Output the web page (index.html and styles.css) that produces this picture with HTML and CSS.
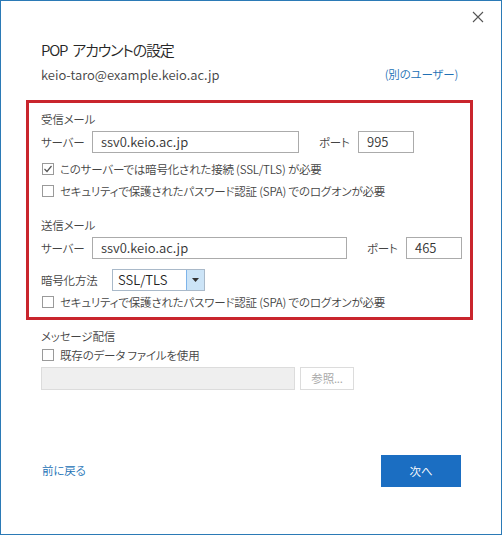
FILE: index.html
```html
<!DOCTYPE html>
<html lang="ja">
<head>
    <meta charset="UTF-8">
    <title>POP アカウントの設定</title>
    <link rel="stylesheet" href="styles.css">
</head>
<body>
    <div id="dialog">
        <div class="topbar">
            <svg class="close" width="12" height="12" viewBox="0 0 12 12">
                <path d="M1 1 L11 11 M11 1 L1 11" stroke="#555" stroke-width="1.1" fill="none"/>
            </svg>
        </div>
        <div class="main">
            <h1 class="title">POP アカウントの設定</h1>
            <div class="account">
                <span class="email">keio-taro@example.keio.ac.jp</span>
                <a class="link">(別のユーザー)</a>
            </div>

            <div class="servers">
                <div class="section">受信メール</div>
                <div class="row">
                    <span class="label">サーバー</span>
                    <span class="field host-in">ssv0.keio.ac.jp</span>
                    <span class="label port-label">ポート</span>
                    <span class="field port">995</span>
                </div>
                <div class="check first">
                    <span class="box"><svg width="10" height="10" viewBox="0 0 10 10"><path d="M1.5 5 L4 7.5 L8.5 2" stroke="#555" stroke-width="1.2" fill="none"/></svg></span>
                    <span>このサーバーでは暗号化された接続 (SSL/TLS) が必要</span>
                </div>
                <div class="check">
                    <span class="box"></span>
                    <span>セキュリティで保護されたパスワード認証 (SPA) でのログオンが必要</span>
                </div>

                <div class="section out">送信メール</div>
                <div class="row">
                    <span class="label">サーバー</span>
                    <span class="field host-out">ssv0.keio.ac.jp</span>
                    <span class="label port-label">ポート</span>
                    <span class="field port">465</span>
                </div>
                <div class="row crypt">
                    <span class="label wide">暗号化方法</span>
                    <span class="select">
                        <span class="value">SSL/TLS</span>
                        <span class="arrow"><svg width="7" height="4" viewBox="0 0 7 4"><path d="M0 0 H7 L3.5 4 Z" fill="#333"/></svg></span>
                    </span>
                </div>
                <div class="check">
                    <span class="box"></span>
                    <span>セキュリティで保護されたパスワード認証 (SPA) でのログオンが必要</span>
                </div>
            </div>

            <div class="section delivery">メッセージ配信</div>
            <div class="check">
                <span class="box"></span>
                <span>既存のデータ ファイルを使用</span>
            </div>
            <div class="row file">
                <span class="field disabled"></span>
                <span class="browse">参照...</span>
            </div>
        </div>
        <div class="footer">
            <a class="link back">前に戻る</a>
            <span class="next">次へ</span>
        </div>
    </div>
</body>
</html>
```

FILE: styles.css
```css
*{
    margin: 0;
    padding: 0;
    box-sizing: border-box;
}
body{
    background: #ffffff;
    font-family: "Noto Sans CJK JP", "Noto Sans", sans-serif;
    font-feature-settings: "palt";
    font-weight: 350;
    color: #444444;
    font-size: 11.5px;
    letter-spacing: -0.2px;
}
#dialog{
    width: 502px;
    height: 535px;
    border: 1px solid #2b7ab6;
    display: flex;
    flex-direction: column;
}
.topbar{
    height: 38px;
    display: flex;
    justify-content: flex-end;
    padding: 10px 17px 0 0;
}
.close{
    display: block;
}
.main{
    padding: 0 40px;
}
.title{
    font-size: 15px;
    font-weight: 350;
    color: #262626;
    line-height: 22px;
    letter-spacing: -1.2px;
    word-spacing: 3px;
}
.account{
    display: flex;
    justify-content: space-between;
    align-items: center;
    height: 22px;
    margin-top: 2px;
}
.email{
    font-size: 13px;
    letter-spacing: 0;
    color: #444444;
}
.link{
    color: #2170b5;
    margin-right: 3px;
}

/* 赤枠 */
.servers{
    margin: 15px -12px 0 -15px;
    border: 3px solid #c9252d;
    padding: 8px 12px 4px 12px;
}
.section{
    line-height: 16px;
    height: 16px;
}
.section.out{
    margin-top: 15px;
}
.row{
    display: flex;
    align-items: center;
    margin-top: 4px;
}
.label{
    width: 51px;
    flex: none;
}
.field{
    height: 22px;
    border: 1px solid #ababab;
    background: #ffffff;
    padding: 0 8px;
    font-size: 13px;
    letter-spacing: 0;
    line-height: 20px;
    color: #333333;
    flex: none;
}
.host-in{
    width: 207px;
}
.host-out{
    width: 255px;
}
.port-label{
    margin-left: 20px;
    width: 39px;
}
.port{
    width: 56px;
}
.crypt{
    margin-top: 10px;
}
.label.wide{
    width: 71px;
}
.select{
    display: flex;
    width: 93px;
    height: 22px;
    border: 1px solid #a9b9c9;
    font-size: 13px;
    letter-spacing: 0;
    color: #222222;
}
.select .value{
    flex: 1;
    padding-left: 5px;
    line-height: 20px;
}
.select .arrow{
    width: 18px;
    background: #cce4f7;
    border-left: 1px solid #7eb4ea;
    display: flex;
    align-items: center;
    justify-content: center;
}
.check{
    display: flex;
    align-items: center;
    height: 22px;
    padding-left: 1px;
}
.check.first{
    margin-top: 5px;
}
.box{
    width: 12px;
    height: 12px;
    border: 1px solid #9a9a9a;
    background: #ffffff;
    margin-right: 6px;
    display: flex;
    align-items: center;
    justify-content: center;
    flex: none;
}
.section.delivery{
    margin-top: 8px;
}
.file{
    margin-top: 1px;
}
.field.disabled{
    width: 254px;
    height: 23px;
    background: #efefef;
    border-color: #dcdcdc;
}
.browse{
    margin-left: 5px;
    width: 54px;
    height: 23px;
    border: 1px solid #dcdcdc;
    color: #a6a6a6;
    text-align: center;
    line-height: 21px;
}
.footer{
    margin-top: auto;
    padding: 0 40px 47px 41px;
    display: flex;
    justify-content: space-between;
    align-items: center;
}
.back{
    margin-top: -3px;
}
.next{
    width: 80px;
    height: 32px;
    background: #1b6ec2;
    color: #ffffff;
    text-align: center;
    line-height: 32px;
}
```
